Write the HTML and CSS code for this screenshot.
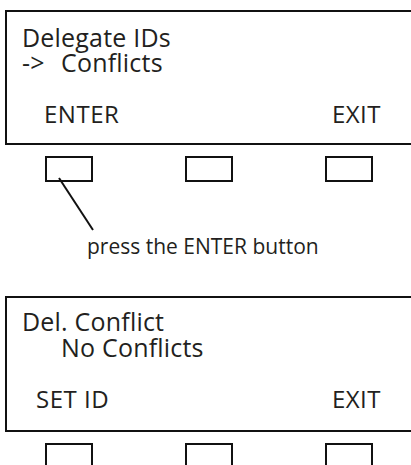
FILE: index.html
```html
<!DOCTYPE html>
<html lang="en">
<head>
    <meta charset="utf-8">
    <title>Delegate IDs - Conflicts</title>
    <link rel="stylesheet" href="styles.css">
</head>
<body>

    <div class="panel">
        <div class="screen">
            <div class="text">
                <div>Delegate IDs</div>
                <div><span class="arrow">-&gt;</span>Conflicts</div>
            </div>
            <div class="keys">
                <span class="key-left">ENTER</span>
                <span>EXIT</span>
            </div>
        </div>
        <div class="buttons">
            <span class="btn"></span>
            <span class="btn"></span>
            <span class="btn"></span>
        </div>
    </div>

    <div class="note">
        <svg class="pointer" width="60" height="60" viewBox="0 0 60 60">
            <line x1="5" y1="2" x2="39" y2="54" stroke="#111" stroke-width="2"/>
        </svg>
        <p>press the ENTER button</p>
    </div>

    <div class="panel second">
        <div class="screen">
            <div class="text">
                <div>Del. Conflict</div>
                <div><span class="arrow"></span>No Conflicts</div>
            </div>
            <div class="keys">
                <span class="key-left">SET ID</span>
                <span>EXIT</span>
            </div>
        </div>
        <div class="buttons">
            <span class="btn"></span>
            <span class="btn"></span>
            <span class="btn"></span>
        </div>
    </div>

</body>
</html>
```

FILE: styles.css
```css
html, body {
    margin: 0;
    height: 100%;
    overflow: hidden;
}
body {
    background: #fff;
    color: #231f20;
    font-family: "Open Sans", "Noto Sans", sans-serif;
}
.panel {
    padding: 10px 0 0 5px;
}
.screen {
    border: 2px solid #111;
    border-right: 0;
    padding: 13px 0 17px 0;
}
.text {
    font-size: 25px;
    letter-spacing: 0.2px;
    line-height: 25px;
    padding-left: 15px;
    margin-bottom: 26px;
}
.arrow {
    display: inline-block;
    width: 39px;
}
.keys {
    display: flex;
    justify-content: space-between;
    font-size: 24px;
    letter-spacing: 0.5px;
    line-height: 25px;
    padding: 0 30px 0 0;
}
.key-left {
    padding-left: 37px;
}
.buttons {
    display: flex;
    gap: 92px;
    margin-top: 11px;
    padding-left: 40px;
}
.btn {
    width: 44px;
    height: 22px;
    border: 2px solid #111;
}
.note {
    position: relative;
    padding-top: 52px;
}
.pointer {
    position: absolute;
    left: 54px;
    top: -6px;
}
.note p {
    margin: 0;
    font-size: 21px;
    line-height: 24px;
    padding-left: 87px;
}
.second {
    padding-top: 38px;
}
.second .screen {
    padding: 10px 0 19px 0;
}
.second .text {
    line-height: 26px;
}
.second .key-left {
    padding-left: 29px;
}
```
